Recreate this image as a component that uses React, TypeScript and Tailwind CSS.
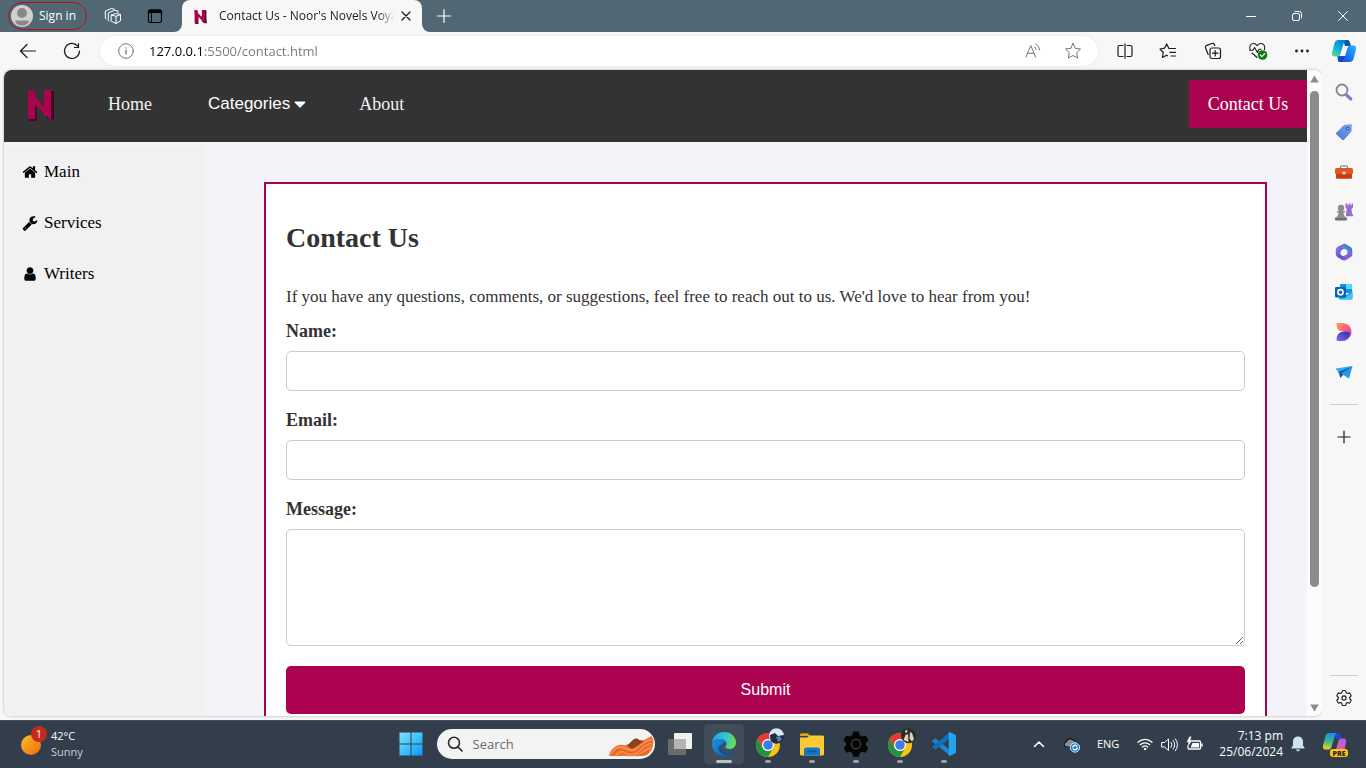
import React from "react";

const UI = "font-['Open_Sans','Noto_Sans',sans-serif]";

type IcoProps = {
  size?: number;
  box?: string;
  className?: string;
  children: React.ReactNode;
};

/** Thin outlined icon used by the browser chrome and the tray. */
function Ico({ size = 16, box = "0 0 16 16", className = "", children }: IcoProps) {
  return (
    <svg
      width={size}
      height={size}
      viewBox={box}
      fill="none"
      stroke="currentColor"
      strokeLinecap="round"
      strokeLinejoin="round"
      aria-hidden="true"
      className={`block shrink-0 ${className}`}
    >
      {children}
    </svg>
  );
}

function BrandMark({ width, height }: { width: number; height: number }) {
  return (
    <svg width={width} height={height} viewBox="0 0 28 33" fill="none" aria-hidden="true" className="block shrink-0">
      <g stroke="#430522" fill="#430522">
        <path d="M6 14v19M23.500 3v28" strokeWidth="7" />
        <path d="M3 9l24 24V23z" stroke="none" />
      </g>
      <g stroke="#ab0350" fill="#ab0350">
        <path d="M4.500 3v28M20.500 2v26" strokeWidth="7" />
        <path d="M1 .5L24 26v6.500L8 16 1 9z" stroke="none" />
      </g>
    </svg>
  );
}

function TitleBar() {
  return (
    <header className="flex h-8 shrink-0 items-stretch bg-[#516773] text-white">
      <div className="flex w-[182px] shrink-0 items-center pl-2">
        <button className="flex h-7 w-[79px] items-center gap-[6px] rounded-full border border-[#b01218] pl-[2px] text-[12px]">
          <svg width="22" height="22" viewBox="0 0 22 22" aria-hidden="true" className="block shrink-0">
            <circle cx="11" cy="11" r="11" fill="#d2d0ce" />
            <circle cx="11" cy="8" r="5" fill="#8a8886" />
            <path d="M4 15.500h14c-.6 3.600-3.500 5-7 5s-6.400-1.400-7-5z" fill="#8a8886" />
          </svg>
          <span className="whitespace-nowrap">Sign in</span>
        </button>
        <button aria-label="Workspaces" className="ml-[17px]">
          <Ico size={18} box="0 0 18 18">
            <path d="M7.500 8l4-1.500 5 1v6.300l-4.500 2.700-4.500-2.200zM7.500 8l4.500 1.300 4.500-1.800M12 9.300v7.200" />
            <path d="M5 14l-.7-.4V6l6-2.700 3.700.8v1.400M2.300 11.800l-1-.5V4.200l6-2.700 3.200.8" />
          </Ico>
        </button>
        <button aria-label="Tab actions" className="ml-[25px] text-black">
          <Ico size={16}>
            <rect x="1.500" y="2" width="13" height="12.500" rx="1.800" strokeWidth="1.200" />
            <path d="M1.500 3.500a1.500 1.500 0 0 1 1.500-1.500h10a1.500 1.500 0 0 1 1.500 1.500V4.500h-13z" fill="currentColor" />
            <path d="M4.500 5v9" />
          </Ico>
        </button>
      </div>
      <div className="relative flex w-60 shrink-0 items-center rounded-t-lg bg-[#f7f7f7] pl-3 text-[12px] text-[#1b1b1b]">
        <svg width="8" height="8" viewBox="0 0 8 8" aria-hidden="true" className="absolute bottom-0 -left-2">
          <path d="M8 0v8H0a8 8 0 0 0 8-8z" fill="#f7f7f7" />
        </svg>
        <svg width="8" height="8" viewBox="0 0 8 8" aria-hidden="true" className="absolute -right-2 bottom-0">
          <path d="M0 0v8h8a8 8 0 0 1-8-8z" fill="#f7f7f7" />
        </svg>
        <BrandMark width={13} height={15} />
        <span className="ml-3 w-[176px] overflow-hidden mask-r-from-90% whitespace-nowrap">
          Contact Us - Noor's Novels Voyage
        </span>
        <button aria-label="Close tab" className="ml-[6px]">
          <Ico size={10} box="0 0 10 10">
            <path d="M1 1l8 8M9 1l-8 8" strokeWidth="1.300" />
          </Ico>
        </button>
      </div>
      <button aria-label="New tab" className="ml-[14px]">
        <Ico size={16}>
          <path d="M8 1.500v13M1.500 8h13" strokeWidth="1.200" />
        </Ico>
      </button>
      <div className="ml-auto flex">
        <button aria-label="Minimize" className="flex w-[46px] items-center justify-center">
          <Ico size={12} box="0 0 12 12">
            <path d="M1.500 6.500h9" />
          </Ico>
        </button>
        <button aria-label="Restore" className="flex w-[46px] items-center justify-center">
          <Ico size={12} box="0 0 12 12">
            <rect x="1.500" y="3.500" width="7" height="7" rx="1.500" />
            <path d="M4 1.500h4.500a2 2 0 0 1 2 2V8" />
          </Ico>
        </button>
        <button aria-label="Close" className="flex w-[46px] items-center justify-center">
          <Ico size={12} box="0 0 12 12">
            <path d="M1.500 1.500l9 9M10.500 1.500l-9 9" />
          </Ico>
        </button>
      </div>
    </header>
  );
}

function CopilotMark() {
  return (
    <svg width="26" height="26" viewBox="0 0 26 26" aria-hidden="true" className="block">
      <defs>
        <linearGradient id="cpA" x1="0" y1="1" x2=".6" y2="0">
          <stop offset="0" stopColor="#5fe08a" />
          <stop offset=".5" stopColor="#12b5d6" />
          <stop offset="1" stopColor="#0a84d8" />
        </linearGradient>
        <linearGradient id="cpB" x1="0" y1="1" x2="1" y2="0">
          <stop offset="0" stopColor="#1b45d8" />
          <stop offset=".6" stopColor="#1a8cff" />
          <stop offset="1" stopColor="#33b7f5" />
        </linearGradient>
      </defs>
      <path d="M12 2h4.500c1.800 0 2.300 1.800 2.800 3.500L20 8h-6z" fill="#0b5a9c" />
      <path d="M8 24h4l3-6H6.300l.6 3.500C7.100 23 7.200 24 8 24z" fill="#1843d0" />
      <path d="M7.500 2h7.300c-1.300.8-1.900 2.500-2.400 4.200L9.500 16c-.7 2-1.800 2.500-3.500 2.500H3.500C1.200 18.500.6 16.500 1 14.500L3.500 5C4 3 5.500 2 7.500 2z" fill="url(#cpA)" />
      <path d="M18.500 24h-7.300c1.300-.8 1.900-2.500 2.400-4.200L16.500 10c.7-2 1.800-2.500 3.500-2.500h2.500c2.300 0 2.900 2 2.500 4L22.500 21c-.5 2-2 3-4 3z" fill="url(#cpB)" />
    </svg>
  );
}

function Toolbar() {
  return (
    <div className="flex h-[38px] shrink-0 items-center bg-[#f7f7f7] text-[#1b1b1b]">
      <button aria-label="Back" className="ml-[19px]">
        <Ico size={18} box="0 0 18 18">
          <path d="M16.500 9H1.500M8 2.500L1.500 9 8 15.500" strokeWidth="1.200" />
        </Ico>
      </button>
      <button aria-label="Refresh" className="ml-[26px]">
        <Ico size={18} box="0 0 18 18">
          <path d="M16.500 9A7.500 7.500 0 1 1 14.800 4.200M15.500 1.500v4h-4" strokeWidth="1.200" />
        </Ico>
      </button>
      <div className="ml-[19px] flex h-[30px] min-w-0 flex-1 items-center rounded-full bg-white pl-[18px] shadow-[0_0_2px_rgba(0,0,0,0.12)]">
        <Ico className="text-[#767676]">
          <circle cx="8" cy="8" r="7.300" />
          <path d="M8 7.500v3.500" strokeWidth="1.300" />
          <path d="M8 4.900v.1" strokeWidth="1.500" />
        </Ico>
        <input
          aria-label="Address"
          defaultValue="127.0.0.1:5500/contact.html"
          className="ml-[15px] h-5 min-w-0 flex-1 bg-[linear-gradient(to_right,#000000_54px,#767676_54px)] bg-clip-text text-[13px] text-transparent outline-none"
        />
        <button aria-label="Read aloud" className="text-[#767676]">
          <Ico>
            <path d="M1 14L5.800 2.500 10.500 14M2.600 10.300h6.300" />
            <path d="M9.500 3.800a4 4 0 0 1 1.700 3M10.700 1a7.500 7.500 0 0 1 4 6" />
          </Ico>
        </button>
        <button aria-label="Add to favorites" className="mr-4 ml-[23px] text-[#767676]">
          <Ico size={18} box="0 0 18 18">
            <path d="M9 1.500l2.300 4.800 5.200.7-3.800 3.700.9 5.300L9 13.500 4.400 16l.9-5.300L1.500 7l5.200-.7z" />
          </Ico>
        </button>
      </div>
      <div className="flex w-[224px] shrink-0 items-center justify-between pr-3 pl-[19px]">
        <button aria-label="Split screen">
          <Ico>
            <path d="M6 2.500H2.500a1.500 1.500 0 0 0-1.500 1.500v8a1.500 1.500 0 0 0 1.500 1.500H6M10 2.500h3.500a1.500 1.500 0 0 1 1.500 1.500v8a1.500 1.500 0 0 1-1.500 1.500H10M8 .8v14.400" strokeWidth="1.200" />
          </Ico>
        </button>
        <button aria-label="Favorites">
          <Ico size={18} box="0 0 18 18">
            <path d="M9.900 6.500L7.700 2 5.500 6.200 1 7l3.300 3.500-.8 5 4-2.300 1 .6M9.900 6.500H16.500M11 10.300h5.500M12 14h4.500" strokeWidth="1.200" />
          </Ico>
        </button>
        <button aria-label="Collections">
          <Ico size={18} box="0 0 18 18">
            <rect x="6" y="6" width="10.500" height="10.500" rx="2" strokeWidth="1.200" />
            <path d="M11.200 8.500v5.500M8.500 11.200H14M4.200 12.500L1.600 6a2 2 0 0 1 1.200-2.600l5-1.900a2 2 0 0 1 2.600 1.100l.3.900" strokeWidth="1.200" />
          </Ico>
        </button>
        <button aria-label="Browser essentials">
          <Ico size={20} box="0 0 20 20">
            <path d="M2 8.500C1 5 3 2.500 5.500 2.500c1.700 0 2.800.8 3.700 2.200.9-1.400 2-2.200 3.700-2.200 2.800 0 4.600 2.800 3.600 6M4 12l5 4.500M1.500 9.300h3.300L6.600 6.500l2.800 5 1.700-3.200h2" strokeWidth="1.100" />
            <circle cx="14.500" cy="14" r="4.800" fill="#107c10" stroke="none" />
            <path d="M12.300 14.100l1.600 1.500 2.800-2.900" stroke="#fff" strokeWidth="1.200" />
          </Ico>
        </button>
        <button aria-label="Settings and more">
          <svg width="16" height="16" viewBox="0 0 16 16" fill="currentColor" aria-hidden="true">
            <circle cx="2.500" cy="8" r="1.400" />
            <circle cx="8" cy="8" r="1.400" />
            <circle cx="13.500" cy="8" r="1.400" />
          </svg>
        </button>
      </div>
      <button aria-label="Copilot" className="flex w-[44px] shrink-0 justify-center">
        <CopilotMark />
      </button>
    </div>
  );
}

function SiteNav() {
  return (
    <nav className="flex h-[72px] shrink-0 items-center bg-[#333333] pb-1 text-[18px] text-[#f2f2f2]">
      <a href="#home" aria-label="Noor's Novels Voyage" className="ml-[23px]">
        <BrandMark width={28} height={33} />
      </a>
      <a href="#home" className="ml-[53px]">Home</a>
      <button className="ml-[56px] flex items-center gap-1 font-['Liberation_Sans',sans-serif] text-[17px] text-white">
        Categories
        <svg width="12" height="7" viewBox="0 0 12 7" aria-hidden="true" className="block">
          <path d="M1.300 .5h9.400c.7 0 1 .7.500 1.200L6.700 6.300a1 1 0 0 1-1.400 0L.8 1.700C.3 1.200.6.5 1.300.5z" fill="currentColor" />
        </svg>
      </button>
      <a href="#about" className="ml-[53px]">About</a>
      <a href="#contact" className="ml-auto flex h-12 w-[118px] items-center justify-center bg-[#ab0350] text-white">
        Contact Us
      </a>
    </nav>
  );
}

const sideLinks = [
  {
    label: "Main",
    path: "M1472 992v480q0 26-19 45t-45 19h-384v-384h-256v384h-384q-26 0-45-19t-19-45v-480q0-1 .5-3t.5-3l575-474 575 474q1 2 1 6zm223-69l-62 74q-8 9-21 11h-3q-13 0-21-7l-692-577-692 577q-12 8-24 7-13-2-21-11l-62-74q-8-10-7-23.500t11-21.500l719-599q32-26 76-26t76 26l244 204v-195q0-14 9-23t23-9h192q14 0 23 9t9 23v408l219 182q10 8 11 21.500t-7 23.500z",
  },
  {
    label: "Services",
    path: "M448 1472q0-26-19-45t-45-19-45 19-19 45 19 45 45 19 45-19 19-45zm644-420l-682 682q-37 37-90 37-52 0-91-37l-106-108q-38-36-38-90 0-53 38-91l681-681q39 98 114.500 173.500t173.500 114.500zm634-435q0 39-23 106-47 134-164.500 217.500t-258.500 83.500q-185 0-316.500-131.500t-131.500-316.500 131.500-316.500 316.500-131.500q58 0 121.500 16.500t107.500 46.500q16 11 16 28t-16 28l-293 169v224l193 107q5-3 79-48.500t135.500-81 70.500-35.500q15 0 23.500 10t8.500 25z",
  },
  {
    label: "Writers",
    path: "M1536 1399q0 109-62.500 187t-150.500 78h-854q-88 0-150.500-78t-62.500-187q0-85 8.500-160.500t31.500-152 58.500-131 94-89 134.500-34.500q131 128 313 128t313-128q76 0 134.500 34.500t94 89 58.500 131 31.500 152 8.500 160.500zm-256-887q0 159-112.500 271.500t-271.500 112.500-271.500-112.500-112.500-271.500 112.500-271.500 271.500-112.500 271.500 112.500 112.500 271.500z",
  },
];

function SideMenu() {
  return (
    <aside className="mt-1 flex w-[200px] shrink-0 flex-col bg-[#f1f1f1] text-[17px] text-black">
      {sideLinks.map(({ label, path }) => (
        <a key={label} href={`#${label.toLowerCase()}`} className="flex h-[51px] items-center gap-[6px] pl-[18px]">
          <svg width="16" height="16" viewBox="0 0 1792 1792" fill="currentColor" aria-hidden="true" className="block">
            <path d={path} />
          </svg>
          {label}
        </a>
      ))}
    </aside>
  );
}

const labelClass = "mb-[10px] text-[18px] leading-[19px] font-bold";
const fieldClass = "block w-full rounded-[5px] border border-[#cccccc] bg-white px-[10px] text-base outline-none";

function ContactForm() {
  return (
    <main className="min-w-0 flex-1 px-[60px] pt-10 pr-10">
      <section className="flex flex-col border-2 border-[#ab0350] bg-white p-5 text-[#333333]">
        <h2 className="mt-5 text-[28px] leading-7 font-bold">Contact Us</h2>
        <p className="mt-[35px] text-[17px] leading-5">
          If you have any questions, comments, or suggestions, feel free to reach out to us. We'd love to hear from you!
        </p>
        <form className="mt-[15px] flex flex-col" onSubmit={(e) => e.preventDefault()}>
          <label htmlFor="name" className={labelClass}>Name:</label>
          <input id="name" type="text" className={`${fieldClass} mb-5 h-10`} />
          <label htmlFor="email" className={labelClass}>Email:</label>
          <input id="email" type="email" className={`${fieldClass} mb-5 h-10`} />
          <label htmlFor="message" className={labelClass}>Message:</label>
          <textarea id="message" className={`${fieldClass} mb-5 h-[117px] resize-y`} />
          <button type="submit" className="h-12 rounded-[5px] bg-[#ab0350] font-['Liberation_Sans',sans-serif] text-base text-white">
            Submit
          </button>
        </form>
      </section>
    </main>
  );
}

function ScrollBar() {
  return (
    <div className="flex w-[15px] shrink-0 flex-col items-center bg-[#fcfcfc] pt-[5px] pb-1" aria-hidden="true">
      <svg width="9" height="8" viewBox="0 0 9 8" className="block shrink-0">
        <path d="M4.500 .5L8.800 7.500H.2z" fill="#8b8b8b" />
      </svg>
      <div className="mt-2 h-[496px] w-[9px] rounded-full bg-[#8b8b8b]" />
      <svg width="9" height="8" viewBox="0 0 9 8" className="mt-auto block shrink-0">
        <path d="M.2 .5h8.600L4.500 7.500z" fill="#8b8b8b" />
      </svg>
    </div>
  );
}

function SideRail() {
  return (
    <aside className="flex w-[44px] shrink-0 flex-col items-center bg-[#f7f7f7] pt-3 text-[#1b1b1b]" aria-label="Sidebar apps">
      <svg width="0" height="0" aria-hidden="true" className="absolute">
        <defs>
          <linearGradient id="tag" x1="0" y1="1" x2="1" y2="0">
            <stop offset="0" stopColor="#4a74d8" />
            <stop offset="1" stopColor="#78a6ea" />
          </linearGradient>
          <linearGradient id="m3a" x1="0" y1="0" x2="1" y2="1">
            <stop offset="0" stopColor="#9a7be8" />
            <stop offset="1" stopColor="#4a4fc4" />
          </linearGradient>
          <linearGradient id="m3b" x1="1" y1="0" x2="0" y2="1">
            <stop offset="0" stopColor="#3d5fc8" />
            <stop offset="1" stopColor="#53b9ec" />
          </linearGradient>
          <linearGradient id="dsA" x1="0" y1="0" x2="1" y2="1">
            <stop offset="0" stopColor="#ffa14d" />
            <stop offset=".5" stopColor="#fb5a86" />
            <stop offset="1" stopColor="#b43cf0" />
          </linearGradient>
          <linearGradient id="dsB" x1="0" y1="1" x2="1" y2="0">
            <stop offset="0" stopColor="#7e6cf0" />
            <stop offset="1" stopColor="#322a9e" />
          </linearGradient>
        </defs>
      </svg>
      <div className="flex flex-col gap-5">
        <button aria-label="Search">
          <svg width="20" height="20" viewBox="0 0 20 20" fill="none" aria-hidden="true">
            <path d="M12.500 13l4.300 4" stroke="#9a72d6" strokeWidth="3.200" strokeLinecap="round" />
            <circle cx="8" cy="8" r="5.500" stroke="#858585" strokeWidth="1.800" />
          </svg>
        </button>
        <button aria-label="Shopping">
          <svg width="20" height="20" viewBox="0 0 20 20" aria-hidden="true">
            <path d="M10 3l6.500-.8c.8 0 1.300.5 1.300 1.300L17.500 9.500 10 17.800c-.6.600-1.300.6-1.900 0L2.500 12.500c-.7-.6-.7-1.300 0-2z" fill="url(#tag)" />
            <circle cx="13.800" cy="6.500" r="1.700" fill="#2d4ea6" />
            <circle cx="13.800" cy="6.500" r=".7" fill="#dfe9fb" />
          </svg>
        </button>
        <button aria-label="Tools">
          <svg width="20" height="20" viewBox="0 0 20 20" aria-hidden="true">
            <path d="M6.500 7V5c0-.8.500-1.200 1.200-1.200h4.600c.7 0 1.200.4 1.200 1.200v2" fill="none" stroke="#8a8a8a" strokeWidth="1.300" />
            <rect x="1" y="6" width="18" height="6" rx="1.500" fill="#e2561f" />
            <path d="M2 12h16v3.500c0 .8-.6 1.300-1.300 1.300H3.300c-.7 0-1.300-.5-1.300-1.300z" fill="#c73c0e" />
            <circle cx="10" cy="11" r="1.700" fill="#d7d7d7" />
          </svg>
        </button>
        <button aria-label="Games">
          <svg width="20" height="20" viewBox="0 0 20 20" aria-hidden="true">
            <path d="M11.500 1.500h1.800v1.700h1.400V1.500h1.700v1.700h1.200V1.500h1.400v4l-1.500 1.200.5 5.300h1v2.300h-7V12l.8-5.300-1.300-1.200z" fill="#9a6bd0" />
            <circle cx="7" cy="6" r="3.200" fill="#8b8b8b" />
            <path d="M3 9h8v1.600H9.500c0 2 .6 3.400 1.800 4.400H2.700c1.200-1 1.800-2.400 1.800-4.400H3z" fill="#8b8b8b" />
            <rect x="1" y="15.300" width="12" height="3.200" rx="1.200" fill="#6f6f6f" />
          </svg>
        </button>
        <button aria-label="Microsoft 365">
          <svg width="20" height="20" viewBox="0 0 20 20" aria-hidden="true">
            <path d="M10.500 1.500L4.500 4.200C2.700 5.200 1.800 6.500 1.800 9v3.500l4.700 2.200V9.800L12 6z" fill="url(#m3a)" />
            <path d="M10.500 1.500l5.300 2.900C17.400 5.300 18.200 6.500 18.200 8v6.500l-4.700-2.700V8.800L7.500 5.200z" fill="url(#m3b)" />
            <path d="M1.800 12l6 5.800c1.300.9 2.900.9 4.300.1l4.200-2.500c1.300-.8 1.900-1.900 1.900-3.400v-1.500L13.500 10v2l-5 2.500z" fill="#8d62d8" />
            <path d="M1.800 12.300c.3 1.500 1 2.400 2.200 3.100l4 2.300 3.500-2.500-5-2.400z" fill="#6f55d0" />
            <circle cx="10" cy="10" r="2.900" fill="#f7f7f7" />
          </svg>
        </button>
        <button aria-label="Outlook">
          <svg width="20" height="20" viewBox="0 0 20 20" aria-hidden="true">
            <rect x="6" y="2" width="12" height="9" rx="1" fill="#1490df" />
            <path d="M12 2h5a1 1 0 0 1 1 1v4h-6z" fill="#50d9ff" />
            <path d="M5 17.500V9.500l7 3.500 6.500-4v7.500a1 1 0 0 1-1 1z" fill="#28a8ea" />
            <path d="M8 17.500l10.500-6.500v5.500a1 1 0 0 1-1 1z" fill="#46c3f4" />
            <rect x="1" y="5" width="11" height="10.500" rx="1" fill="#0a63b8" />
            <circle cx="6.500" cy="10.200" r="2.600" fill="none" stroke="#fff" strokeWidth="1.600" />
          </svg>
        </button>
        <button aria-label="Designer">
          <svg width="20" height="20" viewBox="0 0 20 20" aria-hidden="true">
            <path d="M2.500 2.500C2.500 1.500 3 1 4 1h4c5.500 0 9.500 3.800 9.500 9 0 4.500-3.500 8-7.500 8.500L12 10 5 8.500C3.500 7.500 2.500 5 2.500 2.500z" fill="url(#dsA)" />
            <path d="M2.500 17C2.500 12.500 6 9.500 10 9.500c3.500 0 6 1.500 6 1.500-.5 4.500-3.500 8-8 8H4c-1 0-1.500-1-1.500-2z" fill="url(#dsB)" />
          </svg>
        </button>
        <button aria-label="Drop">
          <svg width="20" height="20" viewBox="0 0 20 20" aria-hidden="true">
            <path d="M18.500 4L1.500 6.500 5 11z" fill="#2fb0f0" />
            <path d="M18.500 4L4.500 10l2 6 3-3.500z" fill="#0b5c9e" />
            <path d="M18.500 4L7 11.500l8 5z" fill="#2497e8" />
          </svg>
        </button>
      </div>
      <hr className="mt-[22px] w-7 border-[#cfcfcf]" />
      <button aria-label="Customize" className="mt-6">
        <Ico>
          <path d="M8 2v12M2 8h12" strokeWidth="1.200" />
        </Ico>
      </button>
      <hr className="mt-auto w-7 border-[#cfcfcf]" />
      <button aria-label="Settings" className="my-[13px]">
        <Ico size={18} box="0 0 24 24">
          <path strokeWidth="1.500" d="M9.700 2.300a10 10 0 0 1 4.600 0l.6 2.700 1.700 1 2.700-.8a10 10 0 0 1 2.300 4L19.600 11v2l2 1.900a10 10 0 0 1-2.300 4l-2.700-.9-1.700 1-.6 2.700a10 10 0 0 1-4.600 0L9.100 19l-1.700-1-2.700.9a10 10 0 0 1-2.300-4l2-1.900v-2l-2-1.800a10 10 0 0 1 2.300-4l2.700.8 1.700-1z" />
          <circle cx="12" cy="12" r="2.800" strokeWidth="1.500" />
        </Ico>
      </button>
    </aside>
  );
}

function ChromeMark({ avatar }: { avatar: "blue" | "gray" }) {
  return (
    <svg width="32" height="32" viewBox="0 0 32 32" aria-hidden="true" className="block">
      <circle cx="16" cy="17" r="12" fill="#fbc116" />
      <path d="M5.600 11A12 12 0 0 1 26.400 11H16a6 6 0 0 0-5.200 9z" fill="#e33b2e" />
      <path d="M5.600 11A12 12 0 0 0 16 29l5.200-9a6 6 0 0 1-10.400 0z" fill="#229342" />
      <circle cx="16" cy="17" r="6" fill="#fff" />
      <circle cx="16" cy="17" r="4.800" fill="#3b7ded" />
      {avatar === "blue" ? (
        <g>
          <circle cx="24.500" cy="7.800" r="7.500" fill="#dce6ef" />
          <path d="M18 7l5-2 3 3 6-1a7.500 7.500 0 0 1-13.500 5.500z" fill="#1d2d45" />
          <path d="M24 9l4-1 2 4-4 2z" fill="#5d7ca0" />
        </g>
      ) : (
        <g>
          <circle cx="24.500" cy="7.800" r="7.500" fill="#2b2b28" />
          <path d="M19.500 12l2-5 2.500-1 .5 8zM26 4l2 1 2 6-2 2.500-2.500-3zM21 3l2-1.500.5 2.500-2 1z" fill="#d9d0b8" />
        </g>
      )}
    </svg>
  );
}

const taskApps = [
  {
    name: "Microsoft Edge",
    state: "active",
    icon: (
      <svg width="26" height="26" viewBox="0 0 26 26" aria-hidden="true">
        <defs>
          <linearGradient id="egA" x1="0" y1=".3" x2="1" y2=".4">
            <stop offset="0" stopColor="#1ca6e2" />
            <stop offset=".5" stopColor="#2cc3d5" />
            <stop offset="1" stopColor="#6bdf52" />
          </linearGradient>
          <linearGradient id="egB" x1="0" y1="0" x2="1" y2="1">
            <stop offset="0" stopColor="#1a8fe0" />
            <stop offset="1" stopColor="#1261b4" />
          </linearGradient>
        </defs>
        <path d="M1 12C1.500 5.500 6.500 1 13 1c7 0 12 5 12 10.500 0 4-3 6.500-6.500 6.500-2.800 0-4.200-1-4.200-2 0-.9 1.200-1.300 1.200-3.500C15.500 9.500 12 8 8.500 8 5 8 2.500 9.500 1 12z" fill="url(#egA)" />
        <path d="M1 12.500C2.200 9.500 5 8 8.500 8c3.500 0 6.500 1.800 7 4-1.500-1.300-5.500-.5-5.500 4 0 5 5 8.500 10 7.500-2 1.200-4.500 1.700-7 1.500C6 24.800.8 19.300 1 12.500z" fill="url(#egB)" />
        <path d="M10.500 13.500C9 18 12 22.500 17 22.500c2.500 0 4.500-.8 6.500-2-1 1.700-2.500 3-4.500 3.700C13 25.500 6 21 7.500 15.500z" fill="#12529c" />
      </svg>
    ),
  },
  { name: "Chrome, first profile", state: "open", icon: <ChromeMark avatar="blue" /> },
  {
    name: "File Explorer",
    state: "open",
    icon: (
      <svg width="26" height="26" viewBox="0 0 26 26" aria-hidden="true">
        <path d="M1 4c0-1 .6-1.700 1.600-1.700h6.200l2.700 2.700H1z" fill="#e3a012" />
        <path d="M1 6.500h7l2.500-2h13c1 0 1.500.6 1.500 1.500v17c0 .8-.5 1.500-1.500 1.500h-21C1.500 24.500 1 23.800 1 23z" fill="#fdc935" />
        <path d="M5 24.500V19c0-1.500 1-2.500 2.500-2.500h11c1.500 0 2.500 1 2.500 2.500v5.500z" fill="#1576c9" />
        <rect x="8.500" y="19.500" width="9" height="1.800" rx=".9" fill="#0d57a1" />
      </svg>
    ),
  },
  {
    name: "Settings",
    state: "open",
    icon: (
      <svg width="26" height="26" viewBox="0 0 26 26" aria-hidden="true">
        <path d="M10.500 1h5l.8 3.500 2.700 1.600 3.500-1.100L25 9.300 22.400 12v2.500L25 17l-2.500 4.200-3.500-1-2.700 1.500-.8 3.600h-5l-.8-3.600L7 20.200l-3.500 1L1 17l2.600-2.500V12L1 9.300 3.500 5 7 6.100l2.700-1.600z" fill="#050505" stroke="#050505" strokeLinejoin="round" />
        <circle cx="13" cy="13" r="4.700" fill="none" stroke="#3c4751" strokeWidth="1.200" />
      </svg>
    ),
  },
  { name: "Chrome, second profile", state: "open", icon: <ChromeMark avatar="gray" /> },
  {
    name: "Visual Studio Code",
    state: "open",
    icon: (
      <svg width="26" height="26" viewBox="0 0 26 26" aria-hidden="true">
        <path d="M1.500 9.500l2-1.700c.4-.3.900-.3 1.300 0L19 18.800v6L1.500 10.800c-.4-.4-.4-.9 0-1.300z" fill="#1b83cf" />
        <path d="M1.500 16.500l2 1.700c.4.300.9.300 1.300 0L19 7.200v-6L1.500 15.200c-.4.400-.4.900 0 1.300z" fill="#0f6fb8" />
        <path d="M18.500 1l5.500 2.500c.6.300 1 .8 1 1.500v16c0 .7-.4 1.200-1 1.500L18.500 25c-.7-.3-.8-.8-.8-1.500v-21c0-.7.100-1.200.8-1.500z" fill="#27a3ee" />
      </svg>
    ),
  },
];

function TaskBar() {
  return (
    <footer className="grid h-12 shrink-0 grid-cols-[1fr_auto_1fr] items-stretch bg-[#323e4b] text-[11px] leading-4 text-white shadow-[inset_0_1px_0_#454f5a]">
      <button className="flex items-center gap-1 justify-self-start pl-5 text-left">
        <span className="relative block h-7 w-[27px]">
          <svg width="22" height="22" viewBox="0 0 22 22" aria-hidden="true" className="mt-1">
            <defs>
              <linearGradient id="sun" x1="0" y1="0" x2="1" y2="1">
                <stop offset="0" stopColor="#f6c12c" />
                <stop offset="1" stopColor="#f0650c" />
              </linearGradient>
            </defs>
            <circle cx="11" cy="11" r="10" fill="url(#sun)" />
          </svg>
          <span className="absolute -top-1 right-0 flex size-4 items-center justify-center rounded-full bg-[#c42b1c]">1</span>
        </span>
        <span>
          <span className="block">42°C</span>
          <span className="block text-[#ccd1d5]">Sunny</span>
        </span>
      </button>

      <div className="flex items-center gap-1 pr-3">
        <button aria-label="Start" className="flex size-10 items-center justify-center">
          <svg width="24" height="24" viewBox="0 0 24 24" aria-hidden="true">
            <defs>
              <linearGradient id="win" x1="0" y1="0" x2="24" y2="24" gradientUnits="userSpaceOnUse">
                <stop offset="0" stopColor="#86e0fb" />
                <stop offset=".5" stopColor="#41c3fb" />
                <stop offset="1" stopColor="#0a93fb" />
              </linearGradient>
            </defs>
            <path d="M.5 .5h11v11H.5zM12.500 .5h11v11h-11zM.5 12.500h11v11H.5zM12.500 12.500h11v11h-11z" fill="url(#win)" />
          </svg>
        </button>
        <div className="mr-px ml-[2px] flex h-[30px] w-[218px] items-center overflow-hidden rounded-full bg-[#f3f3f3] pl-[10px] text-[#2b2b2b]">
          <Ico>
            <circle cx="7" cy="6.800" r="5.500" strokeWidth="1.600" />
            <path d="M11 11l4 4" strokeWidth="1.700" />
          </Ico>
          <input
            aria-label="Search the computer"
            placeholder="Search"
            className="ml-[10px] w-[130px] bg-transparent text-[13px] outline-none placeholder:text-[#6b6b6b]"
          />
          <svg width="48" height="22" viewBox="0 0 48 22" fill="none" aria-hidden="true" className="mt-1 ml-[5px] shrink-0">
            <path d="M1 21c2-8 8-12 14-11 4 .8 6 0 9-2 4-3 7-4 9-2 4-1 7-3 10-5 3 2 3 9 1 13-2 4-5 7-9 7z" fill="#ee7430" />
            <path d="M18 10c3 0 4-3 7-5 2-2 5-2 6 0l5 1-7 5-5 3z" fill="#8c4318" />
            <path d="M3 19c3-6 8-8 13-6s8 3 12 1 7-8 15-9M8 20c3-4 7-4 11-2s9 1 13-3 6-6 12-7M17 21c5 0 10 1 15-2s7-5 11-6" stroke="#ffb27c" strokeWidth=".8" />
            <path d="M5 20c3-5 7-6 11-4s9 3 13 0 7-8 15-9M28 21c6-1 9-3 13-6" stroke="#c9561a" strokeWidth=".7" />
          </svg>
        </div>
        <button aria-label="Task view" className="flex size-10 items-center justify-center">
          <svg width="24" height="22" viewBox="0 0 24 22" aria-hidden="true">
            <rect x="6" y="0" width="18" height="16" rx="1" fill="#f1f1f1" />
            <rect x="0" y="6" width="18" height="16" rx="1" fill="#6b6b6b" />
            <path d="M6 6h12v10H6z" fill="#b4b4b4" />
          </svg>
        </button>
        {taskApps.map(({ name, state, icon }) => (
          <button
            key={name}
            aria-label={name}
            className={`relative flex size-10 items-center justify-center rounded-[4px] ${state === "active" ? "bg-[#414d59]" : ""}`}
          >
            {icon}
            <span
              className={`absolute bottom-px h-[3px] rounded-full ${state === "active" ? "w-4 bg-[#a9c6ca]" : "w-[6px] bg-[#9ba2a8]"}`}
            />
          </button>
        ))}
      </div>

      <div className="flex items-center justify-self-end pr-[18px]">
        <button aria-label="Hidden icons">
          <Ico size={12} box="0 0 12 12">
            <path d="M1.500 8.500L6 4l4.500 4.500" strokeWidth="1.500" />
          </Ico>
        </button>
        <button aria-label="Sync status" className="ml-[18px]">
          <Ico size={17} box="0 0 17 17">
            <path d="M3.500 11C.5 10.500.3 6.500 3.300 6 4 2.500 9.500 1.500 11 5c3 0 4.500 2 4 4.500L9 11z" fill="#8d8d8d" stroke="#111" strokeWidth="1.200" />
            <circle cx="12" cy="11.500" r="4.700" fill="#1c7fd6" stroke="#fff" strokeWidth=".8" />
            <path d="M9.800 11a2.300 2.300 0 0 1 4-1M14.200 12a2.300 2.300 0 0 1-4 1" strokeWidth="1.300" />
          </Ico>
        </button>
        <button className="ml-[17px]">ENG</button>
        <button className="ml-[18px] flex items-center gap-2" aria-label="Network, volume and battery">
          <Ico>
            <path d="M1 6.300a10 10 0 0 1 14 0M3.200 8.700a7 7 0 0 1 9.600 0M5.400 11a4 4 0 0 1 5.200 0" strokeWidth="1.200" />
            <circle cx="8" cy="13" r=".8" fill="currentColor" />
          </Ico>
          <Ico size={17} box="0 0 17 17">
            <path d="M1 6.500h2.500L7.500 3v11.500L3.500 11H1zM10 6.300a4 4 0 0 1 0 5M12.200 4.500a6.500 6.500 0 0 1 0 8.500M14.300 2.800a9 9 0 0 1 0 12" />
          </Ico>
          <Ico size={17} box="0 0 17 17">
            <path d="M6 5h7.500a1 1 0 0 1 1 1v6a1 1 0 0 1-1 1H3a1 1 0 0 1-1-1v-2M16 8v2" strokeWidth="1.300" />
            <path d="M6.500 7H13v4.500H4.500z" fill="currentColor" stroke="none" />
            <path d="M3.500 1L1 6h2l-.8 3.500L6 4.500H4L5 1z" fill="currentColor" strokeWidth=".5" />
          </Ico>
        </button>
        <button className="ml-4 text-right text-[12px]">
          <span className="block">7:13 pm</span>
          <span className="block">25/06/2024</span>
        </button>
        <button aria-label="Notifications" className="ml-[7px] text-[#cfe3ea]">
          <svg width="16" height="16" viewBox="0 0 16 16" fill="currentColor" aria-hidden="true">
            <path d="M8 .5c3 0 5 2.200 5 5v4l1.500 2.300c.2.400 0 .8-.5.800H2c-.5 0-.7-.4-.5-.8L3 9.500v-4c0-2.800 2-5 5-5zM6 13.500h4c-.3 1.200-1 1.800-2 1.800s-1.700-.6-2-1.800z" />
          </svg>
        </button>
        <button aria-label="Copilot preview" className="relative ml-4">
          <svg width="26" height="26" viewBox="0 0 26 26" aria-hidden="true" className="block">
            <defs>
              <linearGradient id="preA" x1=".5" y1="0" x2=".3" y2="1">
                <stop offset="0" stopColor="#1e8ef0" />
                <stop offset=".5" stopColor="#35b88a" />
                <stop offset="1" stopColor="#f5d21d" />
              </linearGradient>
              <linearGradient id="preB" x1="1" y1="0" x2="0" y2="1">
                <stop offset="0" stopColor="#b05cf2" />
                <stop offset="1" stopColor="#f4607a" />
              </linearGradient>
            </defs>
            <path d="M12 2h4.500c1.800 0 2.300 1.800 2.800 3.500L20 8h-6z" fill="#1b49c8" />
            <path d="M7.500 2h7.300c-1.300.8-1.900 2.500-2.400 4.200L9.500 16c-.7 2-1.800 2.500-3.500 2.500H3.500C1.200 18.500.6 16.500 1 14.500L3.500 5C4 3 5.500 2 7.500 2z" fill="url(#preA)" />
            <path d="M18.500 24h-7.300c1.300-.8 1.900-2.500 2.400-4.200L16.500 10c.7-2 1.800-2.500 3.500-2.500h1.500c2.300 0 2.900 2 2.500 4L22 21c-.5 2-1.500 3-3.500 3z" fill="url(#preB)" />
          </svg>
          <span className="absolute right-0 bottom-0 flex h-2 w-[18px] items-center justify-center rounded-[3px] bg-[#fdc70c] text-[7px] leading-none font-extrabold text-[#222222]">
            PRE
          </span>
        </button>
      </div>
    </footer>
  );
}

export default function App() {
  return (
    <div className={`flex h-screen flex-col overflow-hidden bg-[#f7f7f7] ${UI}`}>
      <TitleBar />
      <Toolbar />
      <div className="flex min-h-0 flex-1">
        <div className="mb-1 ml-1 flex min-w-0 flex-1 overflow-hidden rounded-lg bg-white shadow-[0_0_3px_rgba(0,0,0,0.3)]">
          <div className="flex min-w-0 flex-1 flex-col overflow-hidden bg-[#f4f3f9] font-['Liberation_Serif',serif]">
            <SiteNav />
            <div className="flex min-h-0 flex-1">
              <SideMenu />
              <ContactForm />
            </div>
          </div>
          <ScrollBar />
        </div>
        <SideRail />
      </div>
      <TaskBar />
    </div>
  );
}
